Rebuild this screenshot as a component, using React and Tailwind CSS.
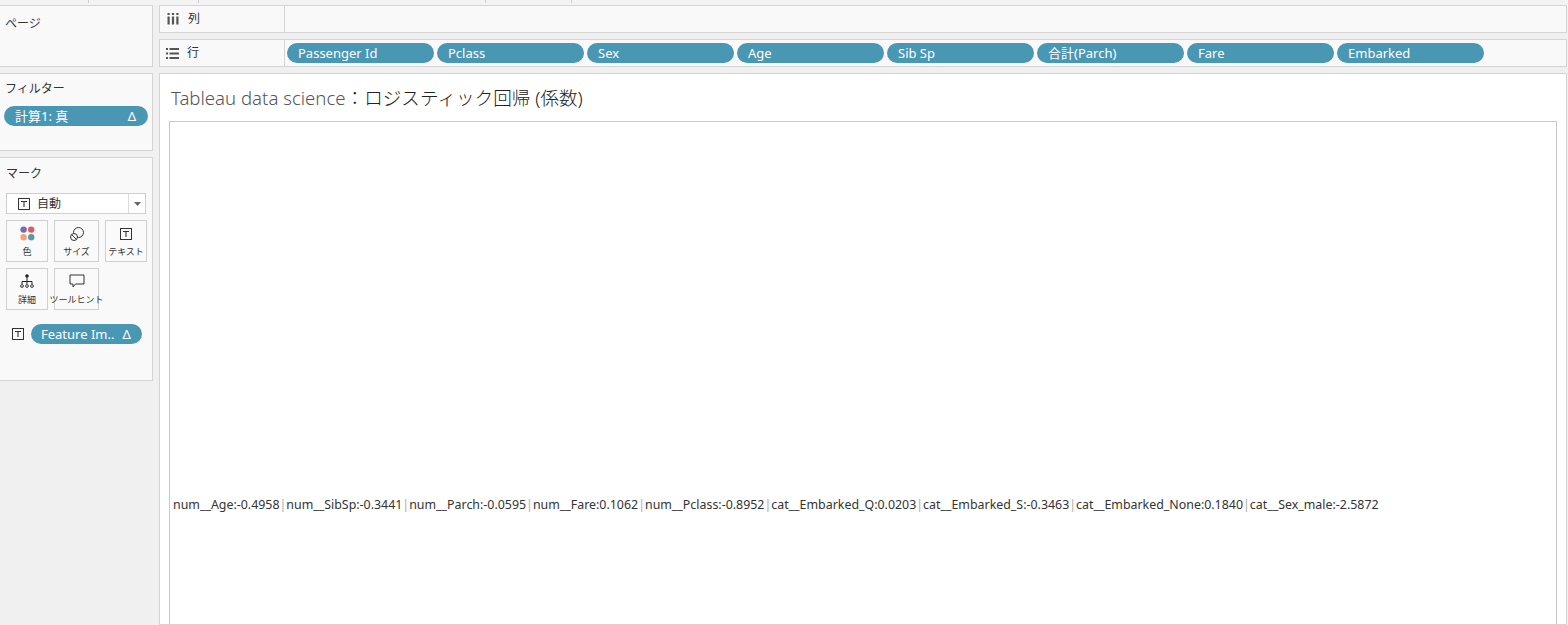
import React from 'react'

const FONT = { fontFamily: '"Noto Sans", "Noto Sans CJK JP", sans-serif' }

const rowPills = ['Passenger Id', 'Pclass', 'Sex', 'Age', 'Sib Sp', '合計(Parch)', 'Fare', 'Embarked']

const coef =
  'num__Age:-0.4958|num__SibSp:-0.3441|num__Parch:-0.0595|num__Fare:0.1062|num__Pclass:-0.8952|cat__Embarked_Q:0.0203|cat__Embarked_S:-0.3463|cat__Embarked_None:0.1840|cat__Sex_male:-2.5872'

function TIcon({ size = 12 }) {
  return (
    <svg width={size} height={size} viewBox="0 0 12 12" className="shrink-0">
      <rect x="0.5" y="0.5" width="11" height="11" fill="none" stroke="#333" strokeWidth="1" />
      <path d="M3 3.5h6M6 3.5v5.5" stroke="#333" strokeWidth="1.1" fill="none" />
    </svg>
  )
}

function ColIcon() {
  return (
    <svg width="12" height="12" viewBox="0 0 12 12" className="shrink-0">
      <rect x="0.5" y="0" width="2.2" height="2" fill="#555" />
      <rect x="4.9" y="0" width="2.2" height="2" fill="#555" />
      <rect x="9.3" y="0" width="2.2" height="2" fill="#555" />
      <rect x="0.5" y="3.5" width="2.2" height="8" fill="#555" />
      <rect x="4.9" y="3.5" width="2.2" height="8" fill="#555" />
      <rect x="9.3" y="3.5" width="2.2" height="8" fill="#555" />
    </svg>
  )
}

function RowIcon() {
  return (
    <svg width="13" height="11" viewBox="0 0 13 11" className="shrink-0">
      {[0, 4.5, 9].map(y => (
        <g key={y}>
          <rect x="0" y={y} width="2" height="2" fill="#555" />
          <rect x="3.5" y={y} width="9.5" height="2" fill="#555" />
        </g>
      ))}
    </svg>
  )
}

function ColorIcon() {
  return (
    <svg width="15" height="15" viewBox="0 0 15 15">
      <circle cx="3.6" cy="3.6" r="3.2" fill="#7a6aa6" />
      <circle cx="11.2" cy="3.6" r="3.2" fill="#e0596b" />
      <circle cx="3.6" cy="11.2" r="3.2" fill="#f3a27a" />
      <circle cx="11.2" cy="11.2" r="3.2" fill="#5d9aa0" />
    </svg>
  )
}

function SizeIcon() {
  return (
    <svg width="16" height="16" viewBox="0 0 16 16">
      <circle cx="9.5" cy="6.5" r="5" fill="none" stroke="#333" strokeWidth="1" />
      <circle cx="5" cy="11" r="3.5" fill="#f9f9f9" stroke="#333" strokeWidth="1" />
      <path d="M3 9l4 4" stroke="#333" strokeWidth="1" />
    </svg>
  )
}

function DetailIcon() {
  return (
    <svg width="14" height="15" viewBox="0 0 14 15">
      <circle cx="7" cy="2" r="1.8" fill="#222" />
      <path d="M7 3.5v4M2 10V7.5h10V10M7 7.5V10" stroke="#222" strokeWidth="1" fill="none" />
      <circle cx="2" cy="12" r="1.4" fill="none" stroke="#222" strokeWidth="0.9" />
      <circle cx="7" cy="12" r="1.4" fill="none" stroke="#222" strokeWidth="0.9" />
      <circle cx="12" cy="12" r="1.4" fill="none" stroke="#222" strokeWidth="0.9" />
    </svg>
  )
}

function TooltipIcon() {
  return (
    <svg width="16" height="15" viewBox="0 0 16 15">
      <path d="M1 1h14v9H6.5L4 13v-3H1z" fill="none" stroke="#333" strokeWidth="1" />
    </svg>
  )
}

function MarkButton({ icon, label }) {
  return (
    <div className="h-[42px] border border-[#d0d0d0] bg-[#fafafa] flex flex-col items-center justify-center">
      <div className="h-[18px] flex items-center justify-center">{icon}</div>
      <span className="text-[9px] leading-[12px] text-[#333] mt-[3px] whitespace-nowrap">{label}</span>
    </div>
  )
}

function Pill({ children, className = '' }) {
  return (
    <div className={`h-[20px] rounded-full bg-[#4a97b3] text-white text-[13px] leading-[20px] flex items-center whitespace-nowrap ${className}`}>
      {children}
    </div>
  )
}

export default function App() {
  return (
    <div className="w-[1568px] h-[625px] overflow-hidden bg-[#f0f0f0] flex flex-col" style={FONT}>
      {/* top strip */}
      <div className="h-[5px] relative shrink-0 bg-[#f3f3f3]">
        {[88, 198, 485, 571].map(x => (
          <div key={x} className="absolute top-0 h-[3px] w-px bg-[#cfcfcf]" style={{ left: x }} />
        ))}
      </div>

      <div className="flex flex-1 min-h-0 gap-[6px]">
        {/* left column */}
        <div className="w-[153px] shrink-0 flex flex-col gap-[6px]">
          <div className="h-[62px] border border-l-0 border-[#d4d4d4] bg-[#f9f9f9] px-[5px] pt-[4px]">
            <span className="text-[12px] text-[#333]">ページ</span>
          </div>
          <div className="h-[78px] border border-l-0 border-[#d4d4d4] bg-[#f9f9f9] px-[4px] pt-[6px]">
            <div className="text-[12px] text-[#333] pl-[1px]">フィルター</div>
            <Pill className="mt-[8px] w-[144px] pl-[11px] pr-[12px] justify-between">
              <span>計算1: 真</span>
              <span className="text-[13px]">Δ</span>
            </Pill>
          </div>
          <div className="h-[224px] border border-l-0 border-[#d4d4d4] bg-[#f9f9f9] px-[6px] pt-[7px]">
            <div className="text-[12px] text-[#333]">マーク</div>
            <div className="mt-[10px] w-[140px] h-[21px] border border-[#cfcfcf] bg-white flex items-center">
              <div className="flex-1 flex items-center gap-[7px] pl-[11px]">
                <TIcon />
                <span className="text-[12px] text-[#333]">自動</span>
              </div>
              <div className="w-[17px] h-full border-l border-[#dcdcdc] flex items-center justify-center">
                <svg width="7" height="4" viewBox="0 0 7 4"><path d="M0 0h7L3.5 4z" fill="#666" /></svg>
              </div>
            </div>
            <div className="mt-[6px] grid grid-cols-[42px_45px_42px] gap-x-[6px] gap-y-[6px]">
              <MarkButton icon={<ColorIcon />} label="色" />
              <MarkButton icon={<SizeIcon />} label="サイズ" />
              <MarkButton icon={<TIcon />} label="テキスト" />
              <MarkButton icon={<DetailIcon />} label="詳細" />
              <MarkButton icon={<TooltipIcon />} label="ツールヒント" />
            </div>
            <div className="mt-[14px] flex items-center gap-[7px] pl-[6px]">
              <TIcon />
              <Pill className="w-[111px] pl-[10px] gap-[8px]">
                <span>Feature Im..</span>
                <span>Δ</span>
              </Pill>
            </div>
          </div>
        </div>

        {/* right column */}
        <div className="flex-1 min-w-0 mr-[1px] flex flex-col gap-[6px]">
          <div className="h-[28px] shrink-0 border border-[#d4d4d4] bg-[#f9f9f9] flex">
            <div className="w-[125px] border-r border-[#d4d4d4] flex items-center gap-[9px] pl-[7px]">
              <ColIcon />
              <span className="text-[12px] text-[#333]">列</span>
            </div>
            <div className="flex-1" />
          </div>
          <div className="h-[28px] shrink-0 border border-[#d4d4d4] bg-[#f9f9f9] flex">
            <div className="w-[125px] border-r border-[#d4d4d4] flex items-center gap-[8px] pl-[6px]">
              <RowIcon />
              <span className="text-[12px] text-[#333]">行</span>
            </div>
            <div className="flex-1 flex items-center gap-[3px] pl-[2px]">
              {rowPills.map(p => (
                <Pill key={p} className="w-[147px] pl-[11px]">{p}</Pill>
              ))}
            </div>
          </div>
          <div className="flex-1 min-h-0 border border-[#d4d4d4] bg-white px-[9px] pt-[11px] flex flex-col">
            <div className="text-[18.6px] leading-[26px] font-light pl-[2px]">
              <span className="text-[#555]">Tableau data science</span>
              <span className="text-[#222]">：ロジスティック回帰 (係数)</span>
            </div>
            <div className="mt-[10px] flex-1 border border-b-0 border-[#c8c8c8] flex items-center">
              <div className="text-[12.4px] text-[#333] pl-[3px] whitespace-nowrap mt-[264px]">
                {coef.split('|').map((s, i) => (
                  <React.Fragment key={i}>
                    {i > 0 && <span className="text-[#aaa]">|</span>}
                    {s}
                  </React.Fragment>
                ))}
              </div>
            </div>
          </div>
        </div>
      </div>
    </div>
  )
}
